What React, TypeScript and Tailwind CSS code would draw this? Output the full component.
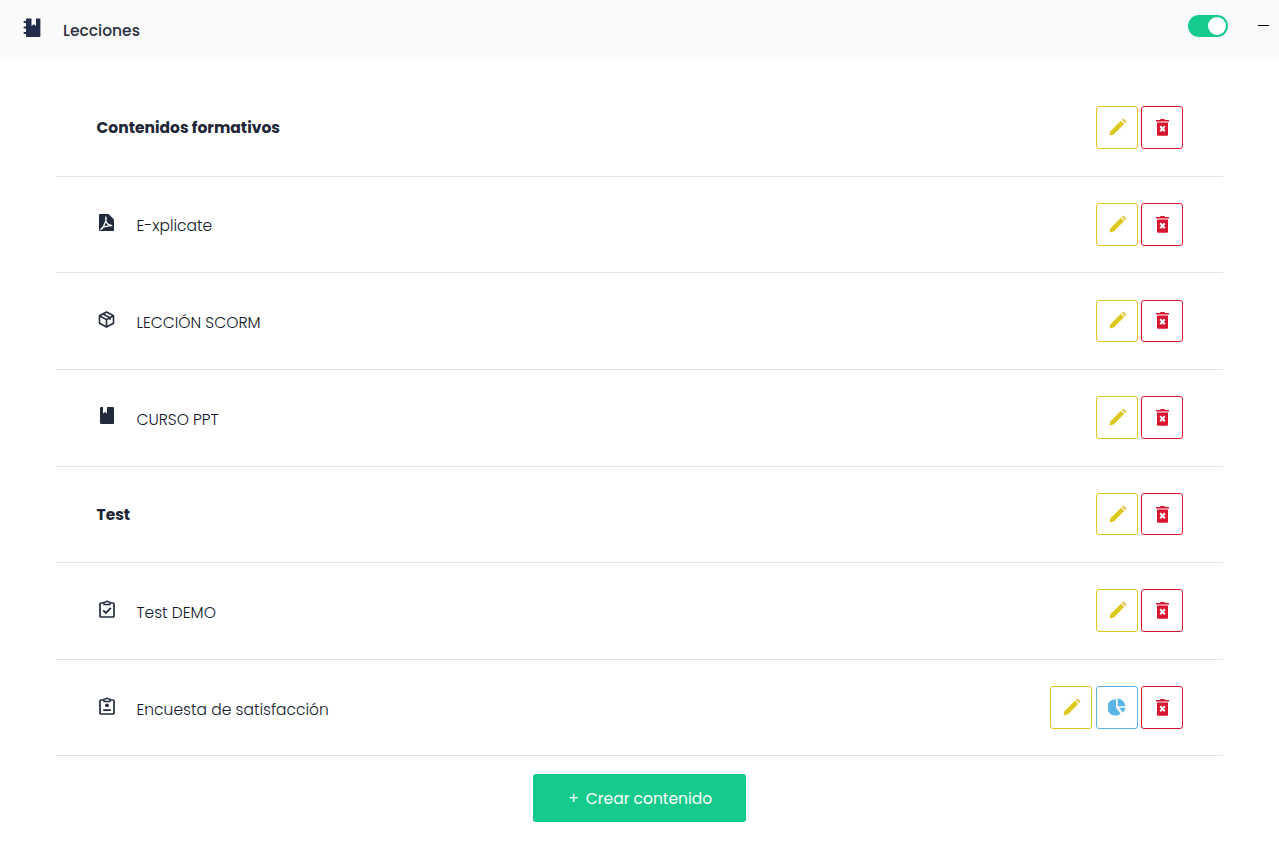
import type { ReactNode } from "react";

const ink = "#222b3c";

function Pencil() {
  return (
    <svg width="19" height="19" viewBox="0 0 20 20" aria-hidden="true">
      <path d="M1.5 18.5 2.6 14 13.6 3 17 6.4 6 17.4Z" fill="#dcc81c" />
      <path d="M14.4 2.2 15.6 1a1 1 0 0 1 1.4 0l2 2a1 1 0 0 1 0 1.4l-1.2 1.2Z" fill="#e3c75a" />
    </svg>
  );
}

function Trash() {
  return (
    <svg width="13" height="17" viewBox="0 0 13 17" aria-hidden="true">
      <path d="M4.5 0h4l.5 1H13v1.4H0V1h4Z" fill="#d8152f" />
      <path d="M1 3.4h11v12.4a1 1 0 0 1-1 1H2a1 1 0 0 1-1-1Z" fill="#d8152f" />
      <path d="m4.2 7.2 4.6 5m0-5-4.6 5" stroke="#fff" strokeWidth="2" fill="none" />
    </svg>
  );
}

function Pie() {
  return (
    <svg width="18" height="18" viewBox="0 0 18 18" aria-hidden="true">
      <path d="M8 1.2V9.6l4.6 6.2A8.2 8.2 0 1 1 8 1.2Z" fill="#5ab4e6" />
      <path d="M9.6 0.6a8.2 8.2 0 0 1 7.9 7.6H9.6Z" fill="#5ab4e6" />
      <path d="M11 9.8h6.6a8.2 8.2 0 0 1-2.7 4.8Z" fill="#5ab4e6" />
    </svg>
  );
}

function Notebook() {
  return (
    <svg width="18" height="19" viewBox="0 0 18 19" aria-hidden="true">
      <path d="M3 1.5A1 1 0 0 1 4 .5h4.5V8l2.3-1.8L13 8V.5h1v0h2.4a1 1 0 0 1 1 1V18a1 1 0 0 1-1 1H4a1 1 0 0 1-1-1Z" fill="#222c4c" />
      <g fill="#222c4c">
        <rect x="0.5" y="3" width="3.5" height="2" rx="1" />
        <rect x="0.5" y="8.5" width="3.5" height="2" rx="1" />
        <rect x="0.5" y="14" width="3.5" height="2" rx="1" />
      </g>
    </svg>
  );
}

function PdfIcon() {
  return (
    <svg width="15" height="17" viewBox="0 0 15 17" aria-hidden="true">
      <path d="M1 0h8.5L15 5.5V16a1 1 0 0 1-1 1H1a1 1 0 0 1-1-1V1a1 1 0 0 1 1-1Z" fill={ink} />
      <path
        d="M7 2.5c-.6 2.5-.6 3.5.6 6 1.2 2 3 3 5.6 3.1-3 .1-7.5.6-9.7 2.2-1.2.9-1.6 1.3-1.6 1.7 1.7-.8 4.6-6.6 5.4-11"
        fill="none"
        stroke="#fff"
        strokeWidth="1.3"
      />
    </svg>
  );
}

function BoxIcon() {
  return (
    <svg width="17" height="17" viewBox="0 0 17 17" fill="none" stroke={ink} strokeWidth="1.6" aria-hidden="true">
      <path d="M8.5 1 15.5 4.8v7.4L8.5 16l-7-3.8V4.8Z" strokeLinejoin="round" />
      <path d="M1.5 4.8 8.5 8.6l7-3.8M8.5 8.6V16M5 3l7 3.8v2" strokeLinejoin="round" />
    </svg>
  );
}

function BookIcon() {
  return (
    <svg width="14" height="17" viewBox="0 0 14 17" aria-hidden="true">
      <path d="M1.2 0H3v6.5l2-1.4 2 1.4V0h5.8A1.2 1.2 0 0 1 14 1.2v14.6a1.2 1.2 0 0 1-1.2 1.2H1.2A1.2 1.2 0 0 1 0 15.8V1.2A1.2 1.2 0 0 1 1.2 0Z" fill={ink} />
    </svg>
  );
}

function Clipboard({ children }: { children: ReactNode }) {
  return (
    <svg width="16" height="18" viewBox="0 0 16 18" fill="none" aria-hidden="true">
      <path d="M5 3H2a1 1 0 0 0-1 1v12a1 1 0 0 0 1 1h12a1 1 0 0 0 1-1V4a1 1 0 0 0-1-1h-3" stroke={ink} strokeWidth="1.7" />
      <path d="M5 4.5V2.2h1.6a1.5 1.5 0 0 1 2.8 0H11v2.3Z" stroke={ink} strokeWidth="1.3" fill="#fff" />
      {children}
    </svg>
  );
}

function CheckClip() {
  return (
    <Clipboard>
      <path d="m4.2 10.3 2.7 2.6 5-5" stroke={ink} strokeWidth="1.8" />
    </Clipboard>
  );
}

function PersonClip() {
  return (
    <Clipboard>
      <circle cx="8" cy="8.3" r="1.9" fill={ink} />
      <path d="M4.2 12.2h7.6V14H4.2Z" fill={ink} />
    </Clipboard>
  );
}

function ActionButton({ color, children, className = "" }: { color: string; children: ReactNode; className?: string }) {
  return (
    <button
      type="button"
      className={`flex h-[42.67px] w-[42px] items-center justify-center rounded-[3px] border bg-white ${color} ${className}`}
    >
      {children}
    </button>
  );
}

type Row = { label: string; icon?: ReactNode; stats?: boolean };

const rows: Row[] = [
  { label: "Contenidos formativos" },
  { label: "E-xplicate", icon: <PdfIcon /> },
  { label: "LECCIÓN SCORM", icon: <BoxIcon /> },
  { label: "CURSO PPT", icon: <BookIcon /> },
  { label: "Test" },
  { label: "Test DEMO", icon: <CheckClip /> },
  { label: "Encuesta de satisfacción", icon: <PersonClip />, stats: true },
];

export default function App() {
  return (
    <div className="min-h-[846px] bg-white font-['Poppins','Inter',sans-serif] text-[#1d2536]">
      <header className="flex h-[57px] items-center bg-[#fafafa] pl-[23px] pr-[10px]">
        <span className="-mt-[3px] flex w-[18px]">
          <Notebook />
        </span>
        <h1 className="ml-[22px] mt-[5px] text-[15.5px] font-medium text-[#2c3040]">Lecciones</h1>
        <div className="ml-auto flex items-center">
          <div className="-mt-[5px] flex h-[22px] w-[40px] items-center justify-end rounded-full bg-[#14cb8c] pr-[2.5px]">
            <span className="h-[18px] w-[18px] rounded-full bg-white" />
          </div>
          <span className="-mt-[6px] ml-[30px] h-[1.5px] w-[11px] bg-black" />
        </div>
      </header>

      <main className="px-[56px] pt-[23px]">
        {rows.map((row) => (
          <div key={row.label} className="flex h-[96.64px] items-center border-b border-[#e3e3e3] px-[40px]">
            {row.icon ? (
              <div className="flex items-center">
                <span className="-mt-[4px] flex w-[21px] justify-center">{row.icon}</span>
                <span className="ml-[19.5px] mt-[3.3px] text-[15.5px] font-light text-[#111a2c]">{row.label}</span>
              </div>
            ) : (
              <span className="ml-[0.5px] text-[15.5px] font-bold">{row.label}</span>
            )}
            <div className="-mt-[0.3px] ml-auto flex gap-[3px]">
              <ActionButton color="border-[#dcc81c]">
                <Pencil />
              </ActionButton>
              {row.stats ? (
                <ActionButton color="border-[#5ab4e6]" className="ml-px">
                  <Pie />
                </ActionButton>
              ) : null}
              <ActionButton color="border-[#d8152f]">
                <Trash />
              </ActionButton>
            </div>
          </div>
        ))}
        <div className="flex justify-center pt-[18px]">
          <button
            type="button"
            className="flex h-[48px] w-[213px] items-center justify-center gap-[7px] rounded-[3px] bg-[#14cb8c] pl-[1.5px] text-[15.5px] text-white"
          >
            <span>+</span>
            <span>Crear contenido</span>
          </button>
        </div>
      </main>
    </div>
  );
}
